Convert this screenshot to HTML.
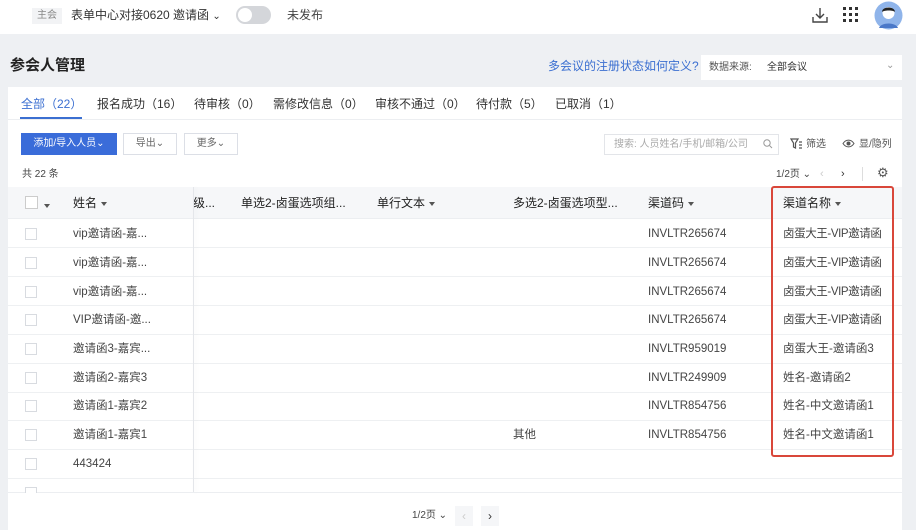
<!DOCTYPE html>
<html><head><meta charset="utf-8"><style>
*{margin:0;padding:0;box-sizing:border-box}
body{width:916px;height:530px;overflow:hidden;background:#eef0f3;font-family:"Liberation Sans","Noto Sans CJK SC",sans-serif;color:#333;position:relative;font-size:12px;line-height:14px}
.a{position:absolute;white-space:nowrap}
.top{position:absolute;left:0;top:0;width:916px;height:34px;background:#fff}
.card{position:absolute;left:8px;top:87px;width:894px;height:443px;background:#fff}
.row{position:absolute;left:8px;width:894px;height:29px;border-bottom:1px solid #eef0f2}
.cb{position:absolute;left:25px;width:12px;height:12px;border:1px solid #d8dbe0;background:#fff}
.tri{display:inline-block;width:0;height:0;border-left:3.5px solid transparent;border-right:3.5px solid transparent;border-top:4px solid #555;vertical-align:middle;margin-left:4px}
.btn{position:absolute;height:22px;border:1px solid #dcdfe6;font-size:10px;color:#666;text-align:center;line-height:20px;background:#fff}
.t{font-size:11.5px;color:#444}
</style></head><body>
<div class="top"></div>
<div class="a" style="left:32px;top:8px;width:30px;height:16px;background:#f2f3f5;color:#888;font-size:10px;text-align:center;line-height:16px">主会</div>
<div class="a" style="left:71px;top:8px;font-size:12px;color:#333">表单中心对接0620 邀请函 <span style="font-size:10px">⌄</span></div>
<div class="a" style="left:236px;top:6px;width:35px;height:18px;border-radius:9px;background:#d4d6da"><div style="position:absolute;left:2px;top:2px;width:14px;height:14px;border-radius:7px;background:#fff"></div></div>
<div class="a" style="left:287px;top:8px;font-size:12px;color:#444">未发布</div>
<svg class="a" style="left:811px;top:6px" width="18" height="18" viewBox="0 0 18 18" fill="none" stroke="#444" stroke-width="1.4"><path d="M9 2v10M5 8l4 4 4-4M2 11v5h14v-5"/></svg>
<svg class="a" style="left:843px;top:7px" width="15" height="15"><g fill="#333"><rect x="0" y="0" width="3" height="3"/><rect x="6" y="0" width="3" height="3"/><rect x="12" y="0" width="3" height="3"/><rect x="0" y="6" width="3" height="3"/><rect x="6" y="6" width="3" height="3"/><rect x="12" y="6" width="3" height="3"/><rect x="0" y="12" width="3" height="3"/><rect x="6" y="12" width="3" height="3"/><rect x="12" y="12" width="3" height="3"/></g></svg>
<svg class="a" style="left:874px;top:1px" width="29" height="29"><circle cx="14.5" cy="14.5" r="14" fill="#8fb4ea"/><path d="M5 27c2-6 17-6 19 0" fill="#4a78c8"/><circle cx="14.5" cy="12" r="6" fill="#fff"/><path d="M8 11c0-6 13-6 13 0c-2-2-11-2-13 0z" fill="#222"/></svg>

<div class="a" style="left:10px;top:57px;font-size:15px;line-height:18px;font-weight:bold;color:#222">参会人管理</div>
<div class="a" style="left:548px;top:59px;font-size:12px;color:#3b6fd1">多会议的注册状态如何定义?</div>
<div class="a" style="left:701px;top:55px;width:201px;height:25px;background:#fff"></div>
<div class="a" style="left:709px;top:61px;font-size:10px;color:#555">数据来源:</div>
<div class="a" style="left:767px;top:61px;font-size:10px;color:#333">全部会议</div>
<div class="a" style="left:886px;top:59px;font-size:10px;color:#999">⌄</div>

<div class="card"></div>
<div class="a" style="left:8px;top:119px;width:894px;height:1px;background:#eceef1"></div>
<div class="a" style="left:21px;top:97px;font-size:12px;color:#3b6fd1">全部（22）</div>
<div class="a" style="left:20px;top:117px;width:62px;height:2px;background:#3b6fd1"></div>
<div class="a" style="left:97px;top:97px;font-size:12px;color:#333">报名成功（16）</div>
<div class="a" style="left:194px;top:97px;font-size:12px;color:#333">待审核（0）</div>
<div class="a" style="left:273px;top:97px;font-size:12px;color:#333">需修改信息（0）</div>
<div class="a" style="left:375px;top:97px;font-size:12px;color:#333">审核不通过（0）</div>
<div class="a" style="left:476px;top:97px;font-size:12px;color:#333">待付款（5）</div>
<div class="a" style="left:555px;top:97px;font-size:12px;color:#333">已取消（1）</div>

<div class="btn" style="left:21px;top:133px;width:96px;background:#3a6cd9;border-color:#3a6cd9;color:#fff">添加/导入人员⌄</div>
<div class="btn" style="left:123px;top:133px;width:54px">导出⌄</div>
<div class="btn" style="left:184px;top:133px;width:54px">更多⌄</div>
<div class="a" style="left:604px;top:134px;width:175px;height:21px;border:1px solid #e3e5e9"></div>
<div class="a" style="left:614px;top:138px;font-size:10px;color:#aaa">搜索: 人员姓名/手机/邮箱/公司</div>
<svg class="a" style="left:763px;top:139px" width="10" height="10" fill="none" stroke="#999"><circle cx="4" cy="4" r="3.2"/><path d="M6.5 6.5L9 9"/></svg>
<svg class="a" style="left:790px;top:138px" width="12" height="11" fill="none" stroke="#555" stroke-width="1.2"><path d="M1 1h7L5.5 5v5L3.5 9V5z M9 4h3M9 7h3M9 10h3"/></svg>
<div class="a" style="left:806px;top:138px;font-size:10px;color:#555">筛选</div>
<svg class="a" style="left:842px;top:139px" width="13" height="9"><path d="M1 4.5C4 0 9 0 12 4.5C9 9 4 9 1 4.5z" fill="none" stroke="#555"/><circle cx="6.5" cy="4.5" r="2" fill="#555"/></svg>
<div class="a" style="left:859px;top:138px;font-size:10px;color:#555">显/隐列</div>

<div class="a" style="left:22px;top:168px;font-size:10px;color:#444">共 22 条</div>
<div class="a" style="left:776px;top:168px;font-size:10px;color:#444">1/2页 ⌄</div>
<div class="a" style="left:820px;top:167px;font-size:11px;color:#ccc">‹</div>
<div class="a" style="left:841px;top:167px;font-size:11px;color:#333">›</div>
<div class="a" style="left:862px;top:167px;width:1px;height:14px;background:#ddd"></div>
<div class="a" style="left:877px;top:166px;font-size:13px;color:#555">⚙</div>

<div class="a" style="left:8px;top:187px;width:894px;height:32px;background:#f6f7f9;border-bottom:1px solid #eceef1"></div>
<div class="a" style="left:25px;top:196px;width:13px;height:13px;border:1px solid #ccc;background:#fff"></div>
<div class="a" style="left:40px;top:198px"><span class="tri"></span></div>
<div class="a" style="left:73px;top:196px;font-size:12px;color:#222">姓名<span class="tri"></span></div>
<div class="a" style="left:193px;top:196px;font-size:12px;color:#222">级...</div>
<div class="a" style="left:241px;top:196px;font-size:12px;color:#222">单选2-卤蛋选项组...</div>
<div class="a" style="left:377px;top:196px;font-size:12px;color:#222">单行文本<span class="tri"></span></div>
<div class="a" style="left:513px;top:196px;font-size:12px;color:#222">多选2-卤蛋选项型...</div>
<div class="a" style="left:648px;top:196px;font-size:12px;color:#222">渠道码<span class="tri"></span></div>
<div class="a" style="left:783px;top:196px;font-size:12px;color:#222">渠道名称<span class="tri"></span></div>

<div class="row" style="top:219px"></div><div class="row" style="top:248px"></div><div class="row" style="top:277px"></div><div class="row" style="top:306px"></div><div class="row" style="top:335px"></div><div class="row" style="top:364px"></div><div class="row" style="top:392px"></div><div class="row" style="top:421px"></div><div class="row" style="top:450px"></div>
<div class="a" style="left:193px;top:187px;width:1px;height:306px;background:#e4e6ea;box-shadow:2px 0 4px rgba(0,0,0,0.06)"></div>
<div class="a" style="left:8px;top:492px;width:894px;height:1px;background:#eceef1"></div>

<div class="cb" style="top:228px"></div><div class="cb" style="top:257px"></div><div class="cb" style="top:286px"></div><div class="cb" style="top:314px"></div><div class="cb" style="top:343px"></div><div class="cb" style="top:372px"></div><div class="cb" style="top:400px"></div><div class="cb" style="top:429px"></div><div class="cb" style="top:458px"></div><div class="cb" style="top:487px;height:6px;border-bottom:0"></div>

<div class="a t" style="left:73px;top:227px">vip邀请函-嘉...</div>
<div class="a t" style="left:73px;top:256px">vip邀请函-嘉...</div>
<div class="a t" style="left:73px;top:285px">vip邀请函-嘉...</div>
<div class="a t" style="left:73px;top:313px">VIP邀请函-邀...</div>
<div class="a t" style="left:73px;top:342px">邀请函3-嘉宾...</div>
<div class="a t" style="left:73px;top:371px">邀请函2-嘉宾3</div>
<div class="a t" style="left:73px;top:399px">邀请函1-嘉宾2</div>
<div class="a t" style="left:73px;top:428px">邀请函1-嘉宾1</div>
<div class="a t" style="left:73px;top:457px">443424</div>
<div class="a t" style="left:513px;top:428px">其他</div>

<div class="a t" style="left:648px;top:227px">INVLTR265674</div>
<div class="a t" style="left:648px;top:256px">INVLTR265674</div>
<div class="a t" style="left:648px;top:285px">INVLTR265674</div>
<div class="a t" style="left:648px;top:313px">INVLTR265674</div>
<div class="a t" style="left:648px;top:342px">INVLTR959019</div>
<div class="a t" style="left:648px;top:371px">INVLTR249909</div>
<div class="a t" style="left:648px;top:399px">INVLTR854756</div>
<div class="a t" style="left:648px;top:428px">INVLTR854756</div>

<div class="a t" style="left:783px;top:227px;letter-spacing:-0.4px">卤蛋大王-VIP邀请函</div>
<div class="a t" style="left:783px;top:256px;letter-spacing:-0.4px">卤蛋大王-VIP邀请函</div>
<div class="a t" style="left:783px;top:285px;letter-spacing:-0.4px">卤蛋大王-VIP邀请函</div>
<div class="a t" style="left:783px;top:313px;letter-spacing:-0.4px">卤蛋大王-VIP邀请函</div>
<div class="a t" style="left:783px;top:342px">卤蛋大王-邀请函3</div>
<div class="a t" style="left:783px;top:371px">姓名-邀请函2</div>
<div class="a t" style="left:783px;top:399px">姓名-中文邀请函1</div>
<div class="a t" style="left:783px;top:428px">姓名-中文邀请函1</div>

<div class="a" style="left:771px;top:186px;width:123px;height:271px;border:2px solid #d9473a;border-radius:3px"></div>

<div class="a" style="left:412px;top:509px;font-size:10px;color:#444">1/2页 ⌄</div>
<div class="a" style="left:455px;top:506px;width:18px;height:20px;background:#f5f6f8;color:#ccc;text-align:center;line-height:20px">‹</div>
<div class="a" style="left:481px;top:506px;width:18px;height:20px;background:#f5f6f8;color:#333;text-align:center;line-height:20px">›</div>
</body></html>
